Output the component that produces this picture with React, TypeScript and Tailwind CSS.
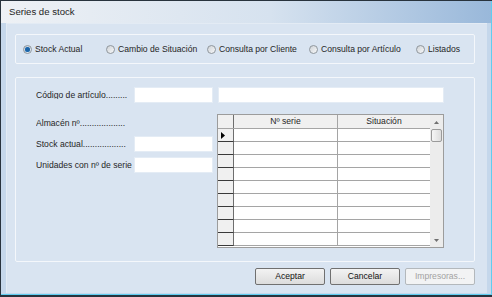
import React from "react";

function Radio({ label, checked, className }: { label: string; checked?: boolean; className: string }) {
  return (
    <div className={`flex items-center ${className}`}>
      <span className="flex h-[9px] w-[9px] shrink-0 items-center justify-center rounded-full border border-[#8f969c] bg-gradient-to-br from-[#cfd3d7] to-[#f7f8f9]">
        {checked && <span className="h-[5px] w-[5px] rounded-full bg-[#1b64a8] shadow-[0_0_1px_#5fa8e6]" />}
      </span>
      <span className="ml-[3px] whitespace-nowrap">{label}</span>
    </div>
  );
}

function Field({ className }: { className: string }) {
  return <div className={`h-[16px] border border-[#e4ecf5] bg-white ${className}`} />;
}

function Label({ text, className = "w-[98px]" }: { text: string; className?: string }) {
  return <div className={`overflow-hidden whitespace-nowrap ${className}`}>{text}</div>;
}

export default function App() {
  const rows = Array.from({ length: 9 });

  return (
    <div className="h-[297px] w-[492px] bg-[#28333d] pb-[2px] pl-[1px] pt-[1px] font-['Liberation_Sans',Arial,sans-serif] text-[8.6px] leading-none text-[#262626]">
      <div className="flex h-full flex-col border-b border-r border-[#5fcdf0] bg-[#c5d7eb]">
        {/* title bar */}
        <div className="flex h-[22px] shrink-0 items-center bg-gradient-to-r from-[#eef1f5] via-[#d6e2ef] via-55% to-[#99b8da] pl-[8px] text-[9.6px] text-[#1e1e1e]">
          Series de stock
        </div>

        {/* client */}
        <div className="mb-[1px] ml-[5px] mr-[4px] flex flex-1 flex-col border-l border-t border-[#e3ebf4] bg-[#d9e4f1] pl-[8px] pt-[10px]">
          {/* option group */}
          <div className="flex h-[30px] w-[460px] items-center rounded-[2px] border border-[#f4f7fb] pl-[7px]">
            <Radio label="Stock Actual" checked className="w-[83px]" />
            <Radio label="Cambio de Situación" className="w-[101px]" />
            <Radio label="Consulta por Cliente" className="w-[102px]" />
            <Radio label="Consulta por Artículo" className="w-[107px]" />
            <Radio label="Listados" className="w-[50px]" />
          </div>

          {/* detail group */}
          <div className="mt-[13px] h-[185px] w-[460px] rounded-[2px] border border-[#f4f7fb] pl-[20px] pt-[9px]">
            <div className="flex h-[16px] items-center">
              <Label text="Código de artículo........." />
              <Field className="w-[79px]" />
              <Field className="ml-[5px] w-[226px]" />
            </div>

            <div className="mt-[11px] flex">
              <div className="flex w-[177px] flex-col">
                <div className="mt-[1px] flex h-[16px] items-center">
                  <Label text="Almacén nº..................." />
                </div>
                <div className="mt-[5px] flex h-[16px] items-center">
                  <Label text="Stock actual.................." />
                  <Field className="w-[79px]" />
                </div>
                <div className="mt-[5px] flex h-[16px] items-center">
                  <Label text="Unidades con nº de serie" />
                  <Field className="w-[79px]" />
                </div>
              </div>

              {/* grid */}
              <div className="ml-[4px] flex h-[134px] w-[227px] border border-[#9c9c9c] bg-white">
                <div className="flex flex-1 flex-col overflow-hidden">
                  <div className="flex h-[14px] shrink-0 border-b border-[#a5a5a5] bg-[#f0f0f0]">
                    <div className="w-[16px] border-r border-[#6e6e6e]" />
                    <div className="flex w-[104px] items-center justify-center border-r border-[#a5a5a5]">Nº serie</div>
                    <div className="flex flex-1 items-center justify-center">Situación</div>
                  </div>
                  {rows.map((_, i) => (
                    <div key={i} className="flex h-[13px] shrink-0">
                      <div className="flex w-[16px] items-center border-b border-r border-b-[#3a3a3a] border-r-[#6e6e6e] bg-[#f0f0f0] pl-[3px]">
                        {i === 0 && (
                          <svg width="4" height="7" viewBox="0 0 4 7">
                            <path d="M0 0 L4 3.5 L0 7 Z" fill="#000" />
                          </svg>
                        )}
                      </div>
                      <div className="w-[104px] border-b border-r border-[#a5a5a5]" />
                      <div className="flex-1 border-b border-[#a5a5a5]" />
                    </div>
                  ))}
                </div>

                {/* scrollbar */}
                <div className="flex w-[13px] shrink-0 flex-col bg-[#ececec]">
                  <div className="flex h-[14px] items-center justify-center">
                    <svg width="5" height="3" viewBox="0 0 5 3">
                      <path d="M0 3 L2.5 0 L5 3 Z" fill="#707070" />
                    </svg>
                  </div>
                  <div className="mx-[1px] h-[13px] rounded-[2px] border border-[#9a9a9a] bg-gradient-to-r from-[#f6f6f6] to-[#dddddd]" />
                  <div className="flex-1" />
                  <div className="flex h-[13px] items-center justify-center">
                    <svg width="5" height="3" viewBox="0 0 5 3">
                      <path d="M0 0 L2.5 3 L5 0 Z" fill="#707070" />
                    </svg>
                  </div>
                </div>
              </div>
            </div>
          </div>

          {/* buttons */}
          <div className="mt-[6px] flex w-[460px] justify-end gap-[5px]">
            <button className="h-[17px] w-[70px] rounded-[2px] border border-[#707070] bg-gradient-to-b from-[#f3f3f3] to-[#dcdcdc] text-[#111]">
              Aceptar
            </button>
            <button className="h-[17px] w-[70px] rounded-[2px] border border-[#707070] bg-gradient-to-b from-[#f3f3f3] to-[#dcdcdc] text-[#111]">
              Cancelar
            </button>
            <button className="h-[17px] w-[70px] rounded-[2px] border border-[#b3b8bc] bg-[#f2f3f4] text-[#a2a2a2]">
              Impresoras...
            </button>
          </div>
        </div>
      </div>
    </div>
  );
}
